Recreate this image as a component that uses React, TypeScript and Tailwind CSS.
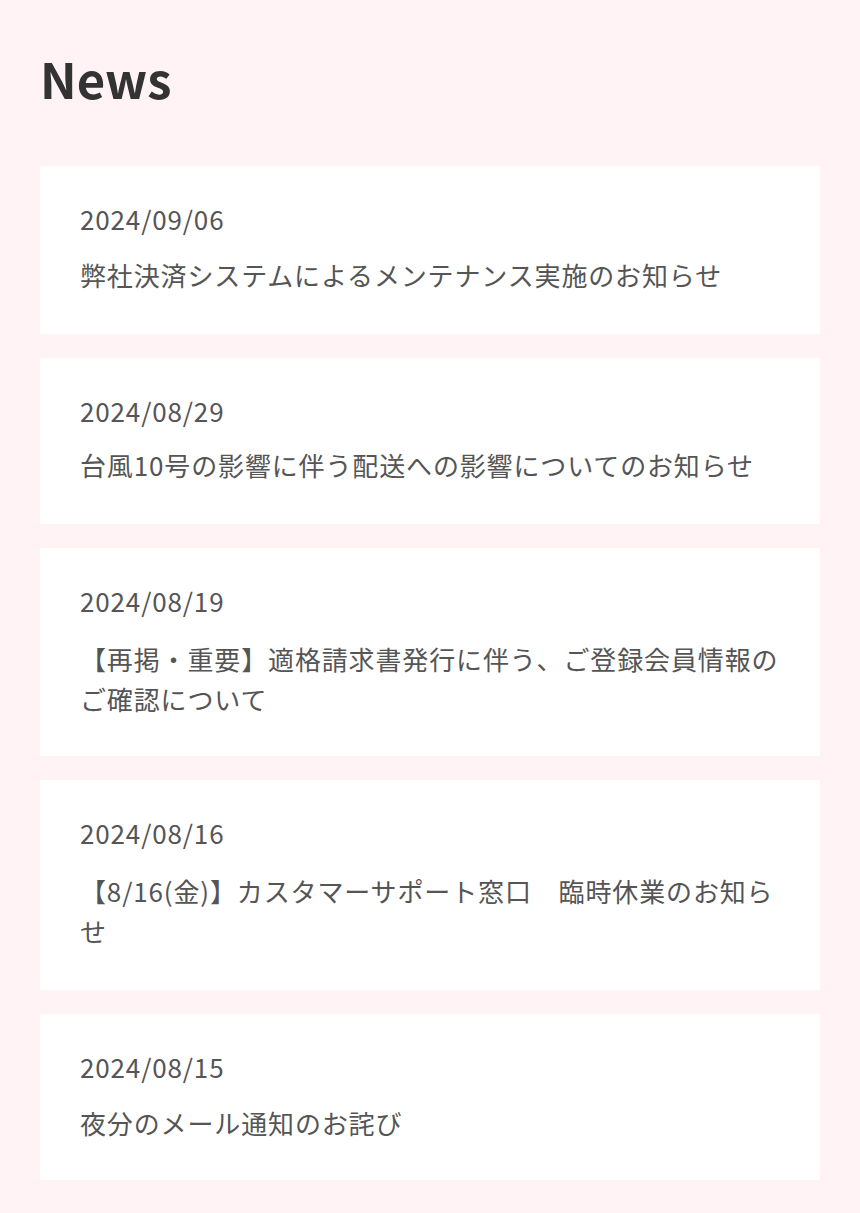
import React from "react";

const items = [
  { date: "2024/09/06", title: "弊社決済システムによるメンテナンス実施のお知らせ", mt: "mt-[16px]", pb: "pb-[39px]" },
  { date: "2024/08/29", title: "台風10号の影響に伴う配送への影響についてのお知らせ", mt: "mt-[14px]", pb: "pb-[39px]" },
  { date: "2024/08/19", title: "【再掲・重要】適格請求書発行に伴う、ご登録会員情報のご確認について", mt: "mt-[18px]", pb: "pb-[37px]" },
  { date: "2024/08/16", title: "【8/16(金)】カスタマーサポート窓口　臨時休業のお知らせ", mt: "mt-[18px]", pb: "pb-[39px]" },
  { date: "2024/08/15", title: "夜分のメール通知のお詫び", mt: "mt-[16px]", pb: "pb-[37px]" },
];

export default function App() {
  return (
    <div
      className="min-h-[1213px] bg-[#fff3f5] px-[40px] pt-[53px] pb-[33px]"
      style={{ fontFamily: '"Noto Sans CJK JP", "Noto Sans", sans-serif' }}
    >
      <h1 className="text-[49px] leading-[49px] font-bold text-[#333333]">News</h1>
      <ul className="mt-[64px] flex flex-col gap-[24px]">
        {items.map((it) => (
          <li key={it.date} className={`bg-white px-[40px] pt-[33px] ${it.pb} text-[#555555]`}>
            <div className="text-[26px] leading-[40px] tracking-[0.86px]">{it.date}</div>
            <p className={`${it.mt} text-[26px] leading-[40px] tracking-[0.86px]`}>{it.title}</p>
          </li>
        ))}
      </ul>
    </div>
  );
}
